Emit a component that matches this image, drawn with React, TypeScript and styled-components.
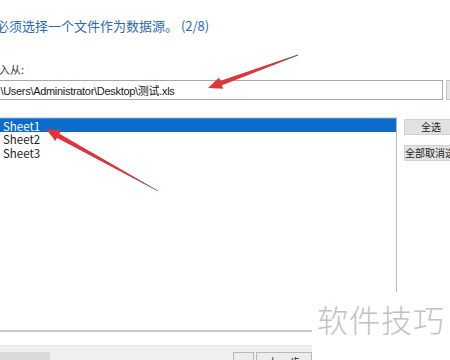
import styled, { createGlobalStyle } from "styled-components";

const GlobalStyle = createGlobalStyle`
  html, body { margin: 0; padding: 0; background: #ffffff; }
  body { font-family: "Noto Sans CJK SC", "Noto Sans", sans-serif; }
`;

const Wizard = {
  Page: styled.div`
    position: relative;
    width: 450px;
    height: 360px;
    overflow: hidden;
    background: #ffffff;
    display: flex;
    flex-direction: column;
  `,
  Title: styled.div`
    margin: 16px 0 0 -4px;
    font-size: 13px;
    line-height: 20px;
    color: #2b69b3;
    white-space: nowrap;
  `,
  Label: styled.div`
    margin: 26px 0 0 -12px;
    font-size: 11px;
    line-height: 14px;
    color: #333333;
  `,
  InputRow: styled.div`
    display: flex;
    gap: 3px;
    margin-top: 4px;
    margin-left: -19px;
  `,
  Input: styled.div`
    flex-shrink: 0;
    width: 452px;
    height: 18px;
    border: 1px solid #a8a8a8;
    box-sizing: content-box;
    display: flex;
    align-items: center;
    padding-left: 8px;
    font-family: "Liberation Sans", "Noto Sans CJK SC", sans-serif;
    font-size: 11px;
    letter-spacing: -0.3px;
    color: #1a1a1a;
    white-space: nowrap;
  `,
  Browse: styled.div`
    flex-shrink: 0;
    width: 30px;
    height: 18px;
    border: 1px solid #c4c4c4;
    background: #e6e6e6;
  `,
  ListRow: styled.div`
    display: flex;
    gap: 7px;
    margin-top: 17px;
  `,
  List: styled.div`
    flex-shrink: 0;
    width: 397px;
    height: 215px;
    box-sizing: border-box;
    border-top: 1px solid #d6dde6;
    border-right: 1px solid #b8b8b8;
    border-bottom: 2px solid #c8c8c8;
  `,
  Item: styled.div<{ $selected?: boolean }>`
    height: 14px;
    line-height: 14px;
    padding-left: 3px;
    font-size: 11.5px;
    color: ${(p) => (p.$selected ? "#ffffff" : "#222222")};
    background: ${(p) => (p.$selected ? "#0c6ccb" : "transparent")};
    border-top: ${(p) => (p.$selected ? "1px solid #4a8fd6" : "none")};
    box-sizing: border-box;
  `,
  Side: styled.div`
    flex-shrink: 0;
    display: flex;
    flex-direction: column;
    gap: 10px;
    padding-top: 2px;
  `,
  SideButton: styled.div<{ $center?: boolean }>`
    width: 52px;
    height: 14px;
    line-height: 14px;
    background: #e1e1e1;
    border: 1px solid #d0d0d0;
    font-size: 10px;
    color: #222222;
    white-space: nowrap;
    overflow: hidden;
    text-align: ${(p) => (p.$center ? "center" : "left")};
    padding-right: ${(p) => (p.$center ? "12px" : "0")};
    box-sizing: content-box;
  `,
  Footer: styled.div`
    margin-top: 13px;
    flex: 1;
    background: #f0f0f0;
    border-top: 1px solid #e4e4e4;
    display: flex;
    align-items: flex-start;
    padding-top: 6px;
    gap: 2px;
  `,
  FooterButton: styled.div<{ $w: number; $ml?: number }>`
    width: ${(p) => p.$w}px;
    margin-left: ${(p) => p.$ml ?? 0}px;
    height: 18px;
    border: 1px solid #b8b8b8;
    background: #ececec;
    font-size: 11px;
    line-height: 18px;
    text-align: center;
    color: #222222;
    box-sizing: border-box;
  `,
  Stub: styled.div`
    width: 50px;
    height: 18px;
    background: #d9d9d9;
  `,
  Watermark: styled.div`
    position: absolute;
    left: 312px;
    top: 292px;
    width: 138px;
    height: 68px;
    background: #ffffff;
    display: flex;
    align-items: flex-start;
    justify-content: center;
    padding-top: 7px;
    box-sizing: border-box;
    font-size: 31px;
    font-weight: 300;
    letter-spacing: 1px;
    line-height: 40px;
    color: #c2c2c2;
  `,
  Overlay: styled.svg`
    position: absolute;
    left: 0;
    top: 0;
    pointer-events: none;
  `,
};

type Pt = [number, number];

function arrowPoints(tip: Pt, tail: Pt) {
  const dx = tail[0] - tip[0];
  const dy = tail[1] - tip[1];
  const len = Math.hypot(dx, dy);
  const ux = dx / len;
  const uy = dy / len;
  const nx = -uy;
  const ny = ux;
  const headLen = 14;
  const headW = 6;
  const base: Pt = [tip[0] + ux * headLen, tip[1] + uy * headLen];
  const p = (x: number, y: number) => `${x.toFixed(1)},${y.toFixed(1)}`;
  const head = [
    p(tip[0], tip[1]),
    p(base[0] + nx * headW, base[1] + ny * headW),
    p(base[0] - nx * headW, base[1] - ny * headW),
  ].join(" ");
  const shaft = [
    p(base[0] - ux * 2 + nx * 2.4, base[1] - uy * 2 + ny * 2.4),
    p(tail[0] + nx * 0.4, tail[1] + ny * 0.4),
    p(tail[0] - nx * 0.4, tail[1] - ny * 0.4),
    p(base[0] - ux * 2 - nx * 2.4, base[1] - uy * 2 - ny * 2.4),
  ].join(" ");
  return { head, shaft };
}

const Arrow = ({ id, tip, tail }: { id: string; tip: Pt; tail: Pt }) => {
  const { head, shaft } = arrowPoints(tip, tail);
  return (
    <g>
      <defs>
        <linearGradient id={id} gradientUnits="userSpaceOnUse" x1={tip[0]} y1={tip[1]} x2={tail[0]} y2={tail[1]}>
          <stop offset="0" stopColor="#e0353b" />
          <stop offset="0.7" stopColor="#d2383c" />
          <stop offset="1" stopColor="#6b5a5a" />
        </linearGradient>
      </defs>
      <polygon points={shaft} fill={`url(#${id})`} />
      <polygon points={head} fill="#e0353b" />
    </g>
  );
};

export default function App() {
  return (
    <>
      <GlobalStyle />
      <Wizard.Page>
        <Wizard.Title>必须选择一个文件作为数据源。 (2/8)</Wizard.Title>
        <Wizard.Label>导入从:</Wizard.Label>
        <Wizard.InputRow>
          <Wizard.Input>C:\Users\Administrator\Desktop\测试.xls</Wizard.Input>
          <Wizard.Browse />
        </Wizard.InputRow>
        <Wizard.ListRow>
          <Wizard.List>
            <Wizard.Item $selected>Sheet1</Wizard.Item>
            <Wizard.Item>Sheet2</Wizard.Item>
            <Wizard.Item>Sheet3</Wizard.Item>
          </Wizard.List>
          <Wizard.Side>
            <Wizard.SideButton $center>全选</Wizard.SideButton>
            <Wizard.SideButton>全部取消选择</Wizard.SideButton>
          </Wizard.Side>
        </Wizard.ListRow>
        <Wizard.Footer>
          <Wizard.Stub />
          <Wizard.FooterButton $w={21} $ml={181} />
          <Wizard.FooterButton $w={56}>上一步</Wizard.FooterButton>
        </Wizard.Footer>
        <Wizard.Watermark>软件技巧</Wizard.Watermark>
        <Wizard.Overlay width={450} height={360}>
          <Arrow id="a1" tip={[208, 88]} tail={[298, 55]} />
          <Arrow id="a2" tip={[46, 129]} tail={[158, 191]} />
        </Wizard.Overlay>
      </Wizard.Page>
    </>
  );
}
